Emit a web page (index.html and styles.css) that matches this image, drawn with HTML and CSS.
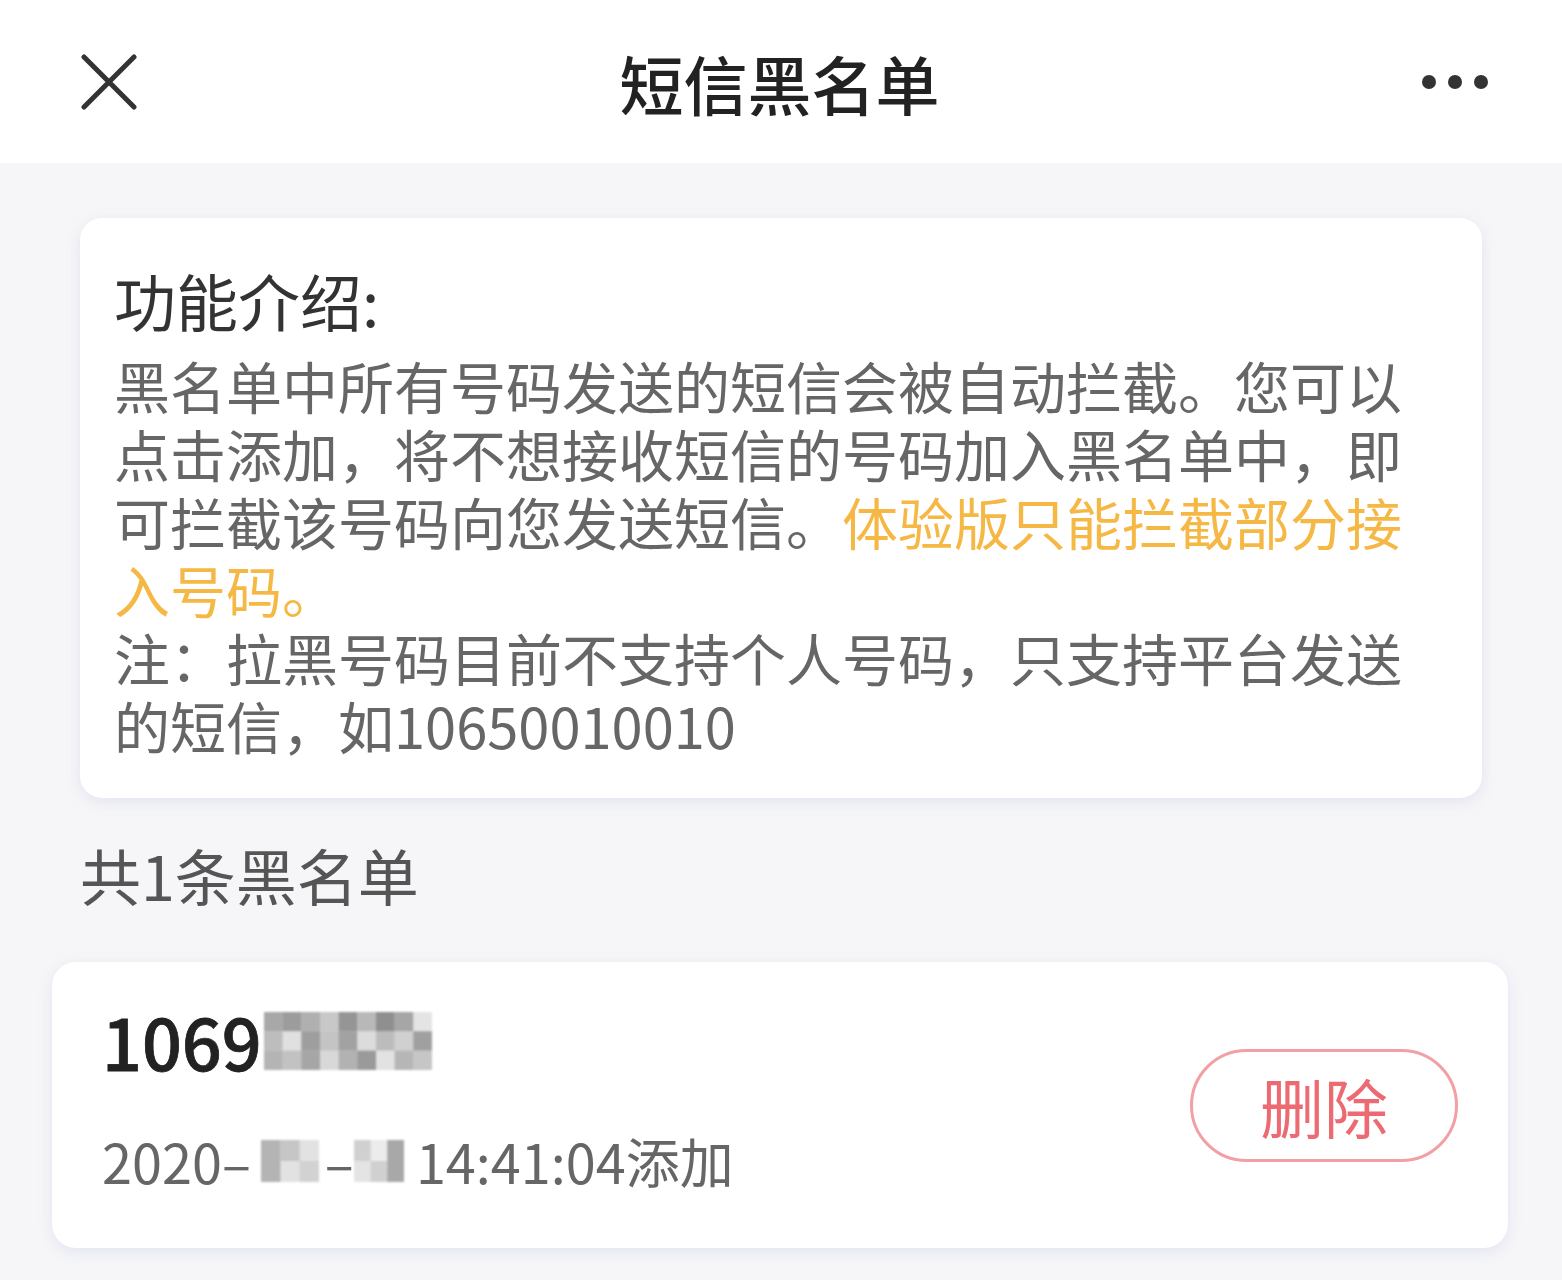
FILE: index.html
```html
<!DOCTYPE html>
<html lang="zh-CN">
<head>
    <meta charset="UTF-8">
    <meta name="viewport" content="width=device-width, initial-scale=1.0">
    <title>短信黑名单</title>
    <link rel="stylesheet" href="styles.css">
</head>
<body>
    <header class="nav-bar">
        <button class="nav-close" aria-label="关闭">
            <svg viewBox="0 0 56 56" width="56" height="56">
                <path d="M3 3 L53 53 M53 3 L3 53" stroke="#333" stroke-width="5" stroke-linecap="round" fill="none"/>
            </svg>
        </button>
        <h1 class="nav-title">短信黑名单</h1>
        <button class="nav-more" aria-label="更多">
            <span class="dot"></span><span class="dot"></span><span class="dot"></span>
        </button>
    </header>

    <main class="page">
        <section class="intro-card">
            <h2 class="intro-title">功能介绍:</h2>
            <p class="intro-text">黑名单中所有号码发送的短信会被自动拦截。您可以点击添加，将不想接收短信的号码加入黑名单中，即可拦截该号码向您发送短信。<span class="highlight">体验版只能拦截部分接入号码。</span></p>
            <p class="intro-text">注：拉黑号码目前不支持个人号码，只支持平台发送的短信，如10650010010</p>
        </section>

        <div class="list-count">共1条黑名单</div>

        <div class="block-item">
            <div class="item-info">
                <div class="item-number">1069<svg class="mosaic" viewBox="0 0 9 3" width="168" height="58" preserveAspectRatio="none">
                    <!-- blurred digits -->
                    <rect x="0" y="0" width="9" height="3" fill="#d6d6d6"/>
                    <rect x="0" y="0" width="1" height="1" fill="#a8a8a8"/>
                    <rect x="1" y="0" width="1" height="1" fill="#9c9c9c"/>
                    <rect x="2" y="0" width="1" height="1" fill="#b0b0b0"/>
                    <rect x="3" y="0" width="1" height="1" fill="#c8c8c8"/>
                    <rect x="4" y="0" width="1" height="1" fill="#959595"/>
                    <rect x="5" y="0" width="1" height="1" fill="#b8b8b8"/>
                    <rect x="6" y="0" width="1" height="1" fill="#8f8f8f"/>
                    <rect x="7" y="0" width="1" height="1" fill="#a6a6a6"/>
                    <rect x="8" y="0" width="1" height="1" fill="#e4e4e4"/>
                    <rect x="0" y="1" width="1" height="1" fill="#bdbdbd"/>
                    <rect x="1" y="1" width="1" height="1" fill="#e0e0e0"/>
                    <rect x="2" y="1" width="1" height="1" fill="#9e9e9e"/>
                    <rect x="3" y="1" width="1" height="1" fill="#c4c4c4"/>
                    <rect x="4" y="1" width="1" height="1" fill="#a2a2a2"/>
                    <rect x="5" y="1" width="1" height="1" fill="#dcdcdc"/>
                    <rect x="6" y="1" width="1" height="1" fill="#bcbcbc"/>
                    <rect x="7" y="1" width="1" height="1" fill="#d0d0d0"/>
                    <rect x="8" y="1" width="1" height="1" fill="#a0a0a0"/>
                    <rect x="0" y="2" width="1" height="1" fill="#b4b4b4"/>
                    <rect x="1" y="2" width="1" height="1" fill="#c2c2c2"/>
                    <rect x="2" y="2" width="1" height="1" fill="#a6a6a6"/>
                    <rect x="3" y="2" width="1" height="1" fill="#d8d8d8"/>
                    <rect x="4" y="2" width="1" height="1" fill="#b2b2b2"/>
                    <rect x="5" y="2" width="1" height="1" fill="#9a9a9a"/>
                    <rect x="6" y="2" width="1" height="1" fill="#e2e2e2"/>
                    <rect x="7" y="2" width="1" height="1" fill="#b6b6b6"/>
                    <rect x="8" y="2" width="1" height="1" fill="#c6c6c6"/>
                </svg></div>
                <div class="item-date">2020–<svg class="mosaic-sm first" viewBox="0 0 3 2" width="58" height="42" preserveAspectRatio="none">
                    <rect x="0" y="0" width="3" height="2" fill="#e2e2e2"/>
                    <rect x="0" y="0" width="1" height="2" fill="#b4b4b4"/>
                    <rect x="1" y="0" width="1" height="1" fill="#c6c6c6"/>
                    <rect x="2" y="1" width="1" height="1" fill="#d2d2d2"/>
                </svg>–<svg class="mosaic-sm" viewBox="0 0 3 2" width="50" height="42" preserveAspectRatio="none">
                    <rect x="0" y="0" width="3" height="2" fill="#d0d0d0"/>
                    <rect x="0" y="1" width="1" height="1" fill="#e4e4e4"/>
                    <rect x="1" y="0" width="1" height="1" fill="#ececec"/>
                    <rect x="2" y="0" width="1" height="2" fill="#a8a8a8"/>
                </svg> 14:41:04添加</div>
            </div>
            <button class="delete-btn">删除</button>
        </div>
    </main>
</body>
</html>
```

FILE: styles.css
```css
body {
    margin: 0;
    background-color: #f6f6f8;
    font-family: "Noto Sans CJK SC", "Noto Sans", sans-serif;
    color: #333;
}
button {
    font-family: inherit;
    background: none;
    border: none;
    padding: 0;
    cursor: pointer;
}

/* top bar */
.nav-bar {
    height: 163px;
    background: #fff;
    display: flex;
    align-items: center;
    justify-content: space-between;
    padding: 0 74px 0 81px;
}
.nav-close {
    width: 56px;
    height: 56px;
    margin-top: 1px;
}
.nav-close svg {
    display: block;
}
.nav-title {
    margin: 0;
    font-size: 64px;
    font-weight: 500;
    color: #222;
}
.nav-more {
    display: flex;
    gap: 12px;
    width: 68px;
    margin-right: -2px;
}
.dot {
    width: 14px;
    height: 14px;
    border-radius: 50%;
    background: #333;
}

.page {
    padding: 55px 0 40px;
}

/* intro */
.intro-card {
    margin: 0 80px;
    background: #fff;
    border-radius: 22px;
    padding: 42px 34px 39px;
    box-shadow: 0 4px 14px rgba(205, 208, 235, 0.45);
}
.intro-title {
    margin: 0 0 11px;
    font-size: 62px;
    font-weight: 400;
    line-height: 80px;
    color: #333;
}
.intro-text {
    margin: 0;
    font-size: 56px;
    line-height: 68px;
    color: #666;
}
.highlight {
    color: #f6b845;
}

.list-count {
    margin: 41px 0 0 80px;
    font-size: 61px;
    line-height: 72px;
    color: #555;
}

/* blacklist entry */
.block-item {
    margin: 51px 54px 0 52px;
    height: 286px;
    box-sizing: border-box;
    background: #fff;
    border-radius: 24px;
    padding: 0 50px;
    display: flex;
    align-items: center;
    justify-content: space-between;
    box-shadow: 0 4px 14px rgba(205, 208, 235, 0.45);
}
.item-info {
    margin-bottom: 8px;
}
.item-number {
    display: flex;
    align-items: center;
    font-size: 70px;
    font-weight: 500;
    line-height: 72px;
    color: #222;
    -webkit-text-stroke: 0.8px #222;
}
.mosaic {
    margin-left: 2px;
    filter: blur(1px);
}
.item-date {
    margin-top: 48px;
    display: flex;
    align-items: center;
    font-size: 54px;
    line-height: 72px;
    color: #666;
    white-space: pre;
}
.mosaic-sm {
    filter: blur(1px);
}
.mosaic-sm.first {
    margin: 0 6px 0 10px;
}
.delete-btn {
    width: 268px;
    height: 113px;
    border: 3px solid #f2a0a4;
    border-radius: 57px;
    color: #ec6b72;
    font-size: 64px;
    line-height: 1;
}
```
